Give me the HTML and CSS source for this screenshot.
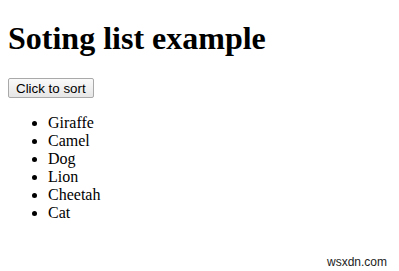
FILE: index.html
```html
<!DOCTYPE html>
<html lang="en">
<head>
    <meta charset="UTF-8">
    <title>Sorting list</title>
    <link rel="stylesheet" href="styles.css">
</head>
<body>
    <h1 class="title">Soting list example</h1>
    <button class="sort-btn" id="sort-btn">Click to sort</button>
    <ul class="animals" id="animals">
        <li>Giraffe</li>
        <li>Camel</li>
        <li>Dog</li>
        <li>Lion</li>
        <li>Cheetah</li>
        <li>Cat</li>
    </ul>

    <!-- watermark -->
    <div class="mark">wsxdn.com</div>

    <script>
        const list = document.getElementById("animals");
        document.getElementById("sort-btn").addEventListener("click", () => {
            const items = Array.from(list.children);
            items.sort((a, b) => a.textContent.localeCompare(b.textContent));
            items.forEach(li => list.appendChild(li));
        });
    </script>
</body>
</html>
```

FILE: styles.css
```css
body {
    font-family: "Liberation Serif", "Times New Roman", serif;
    margin: 8px;
    color: #000;
    background: #fff;
}

.title {
    font-size: 32px;
    font-weight: bold;
    margin: 12px 0 21px;
}

.sort-btn {
    font-family: "Liberation Sans", Arial, sans-serif;
    font-size: 13.33px;
    height: 20px;
    padding: 0 7px;
    background: linear-gradient(#fafafa, #e6e6e6);
    border: 1px solid #a9a9a9;
    border-radius: 2px;
    color: #000;
}

.animals {
    margin: 16px 0;
    padding-left: 40px;
    font-size: 16px;
}

.mark {
    position: absolute;
    right: 12px;
    bottom: 2px;
    font-family: "Liberation Sans", Arial, sans-serif;
    font-size: 12px;
    color: #222;
}
```
